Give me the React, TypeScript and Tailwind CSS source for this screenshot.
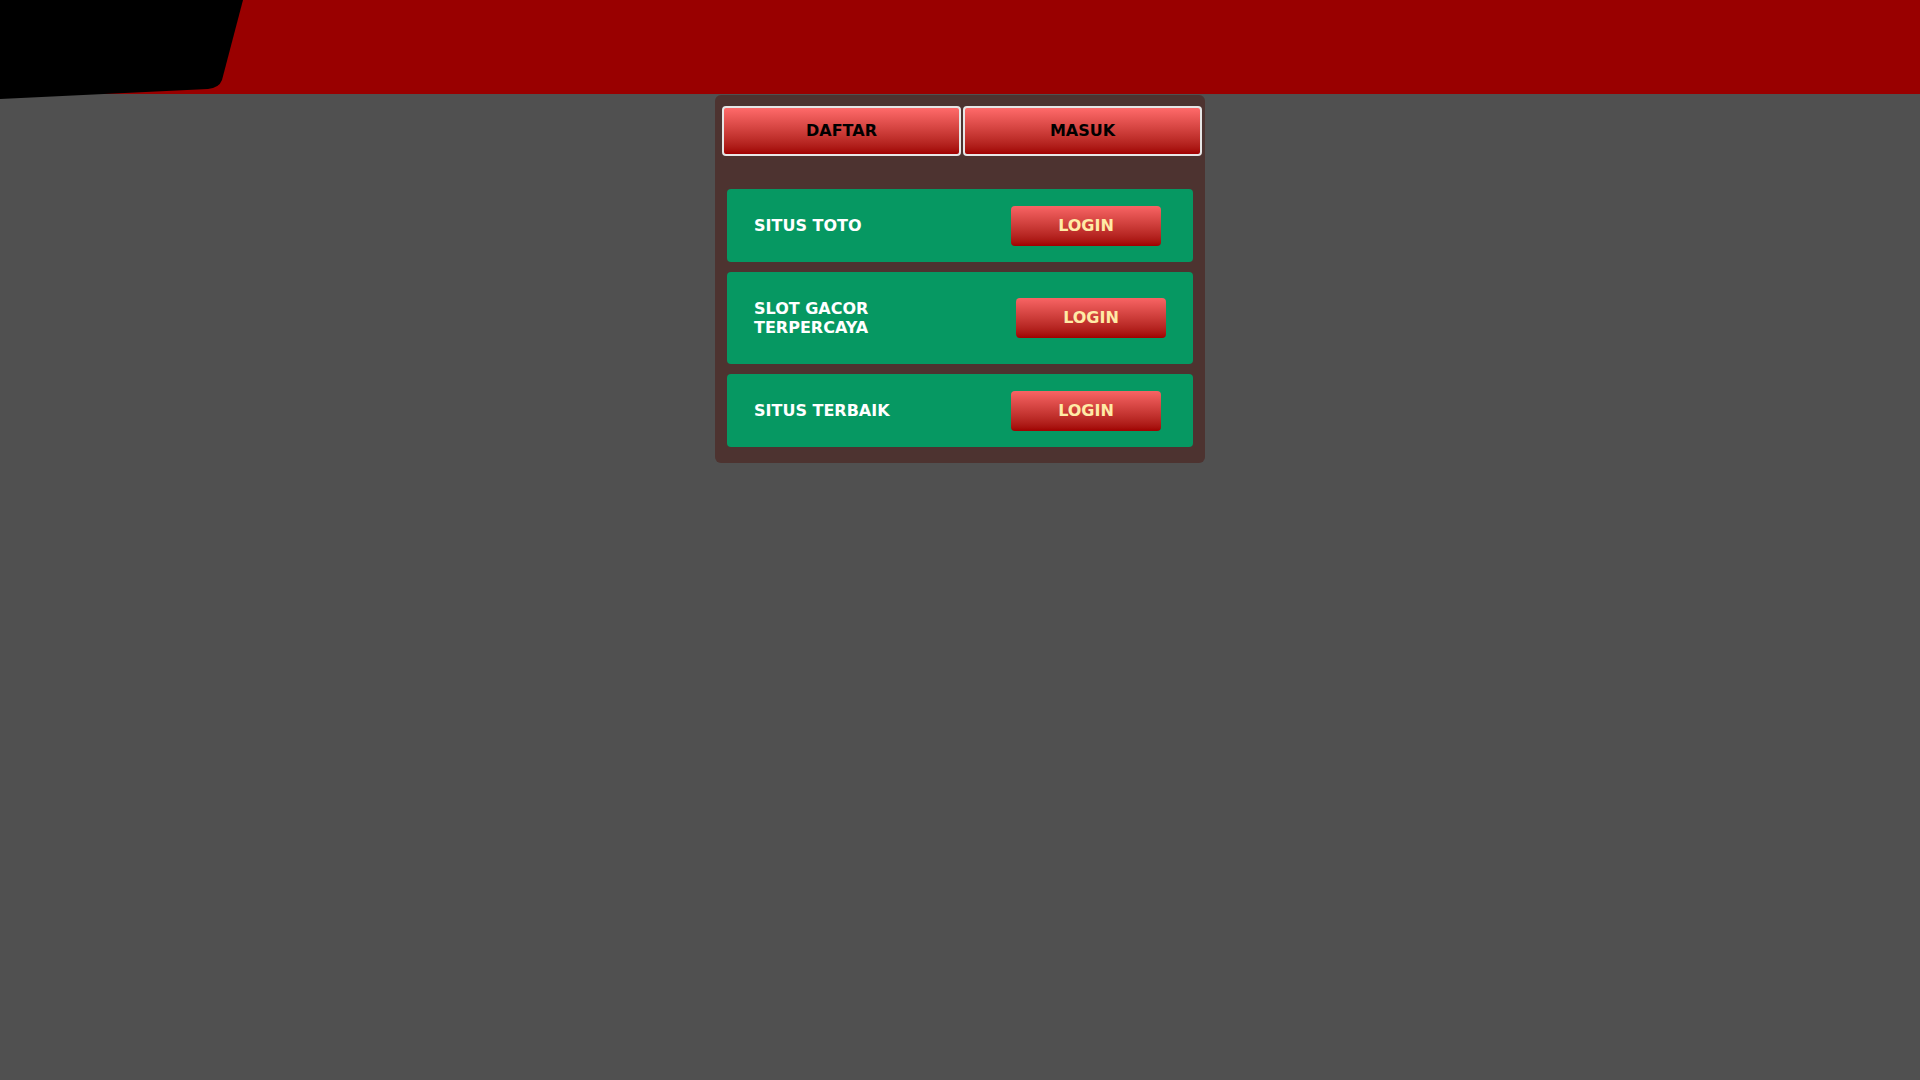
const font = { fontFamily: '"DejaVu Sans", "Liberation Sans", sans-serif' };

type Site = { name: string; pr: string };

const sites: Site[] = [
  { name: "SITUS TOTO", pr: "pr-[32px]" },
  { name: "SLOT GACOR TERPERCAYA", pr: "pr-[27px]" },
  { name: "SITUS TERBAIK", pr: "pr-[32px]" },
];

function Logo() {
  return (
    <svg className="absolute left-0 top-0" width="250" height="100" viewBox="0 0 250 100">
      <path d="M0 0 H243 L222 80 Q219 88 208 89 L0 99 Z" fill="#000" />
    </svg>
  );
}

export default function App() {
  return (
    <div className="min-h-[1080px] w-full bg-[#505050]" style={font}>
      {/* Header */}
      <header className="relative h-[94px] bg-[#990000]">
        <Logo />
      </header>

      {/* Panel */}
      <div className="mx-auto mt-px w-[490px] rounded-md bg-[#4d3330] pl-[7px] pr-[3px] pt-[11px] pb-[16px]">
        <div className="flex gap-[2px]">
          {["DAFTAR", "MASUK"].map((t) => (
            <button
              key={t}
              type="button"
              className="flex h-[50px] flex-1 items-center justify-center rounded-[4px] border-2 border-[#e6e6e6] bg-gradient-to-b from-[#ff6a6a] to-[#a00000] text-[16px] font-bold text-black"
            >
              {t}
            </button>
          ))}
        </div>

        <div className="mt-[33px] mr-[9px] ml-[5px] flex flex-col gap-[10px]">
          {sites.map((s, i) => (
            <div
              key={s.name}
              className={`flex items-center justify-between rounded-[4px] bg-[#069862] pl-[27px] ${s.pr} ${
                i === 1 ? "h-[92px]" : "h-[73px]"
              }`}
            >
              <div className="w-[150px] text-[16px] font-bold leading-[19px] text-white">{s.name}</div>
              <button
                type="button"
                className="flex h-[40px] w-[150px] items-center justify-center rounded-[4px] bg-gradient-to-b from-[#f86464] to-[#a00000] text-[16px] font-bold text-[#ffeaa6]"
              >
                LOGIN
              </button>
            </div>
          ))}
        </div>
      </div>
    </div>
  );
}
